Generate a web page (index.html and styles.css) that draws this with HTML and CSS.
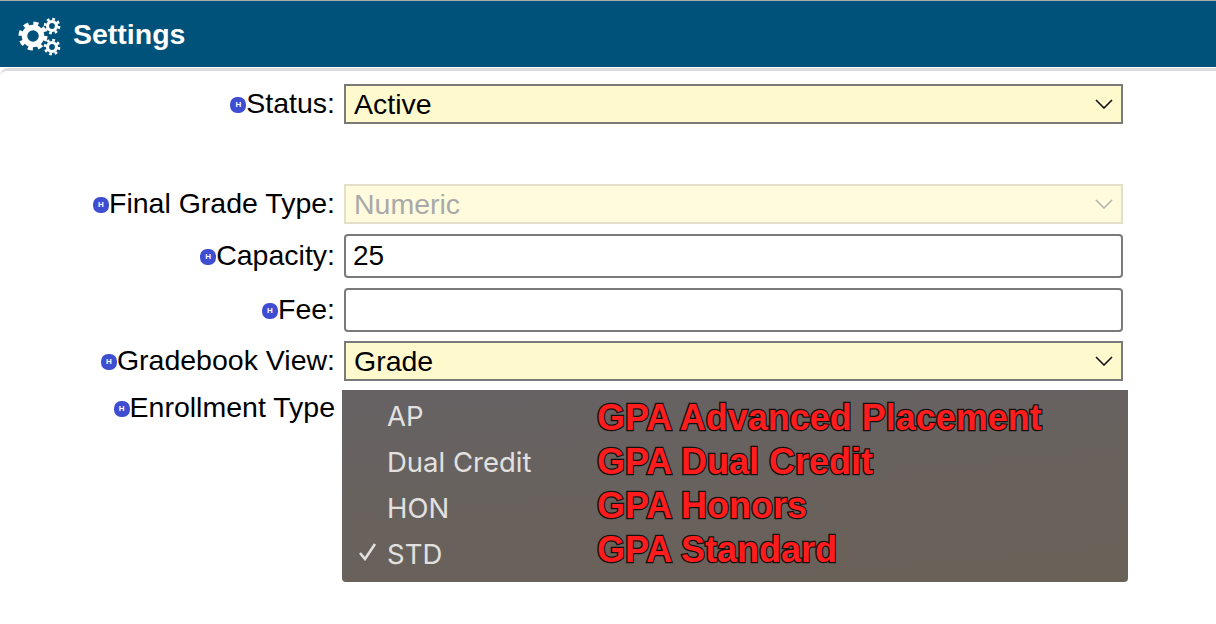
FILE: index.html
```html
<!DOCTYPE html>
<html>
<head>
<title>Settings</title>
<link rel="stylesheet" href="styles.css">
</head>
<body>

<header class="page-header">
  <svg class="gears-icon" width="44" height="44" viewBox="0 0 44 44">
    <g fill="none" stroke="#fff">
      <circle cx="15" cy="23" r="8.5" stroke-width="5.5"/>
      <circle cx="15" cy="23" r="12.5" stroke-width="4" stroke-dasharray="5 4.82"/>
      <circle cx="34" cy="13" r="4.5" stroke-width="3.2"/>
      <circle cx="34" cy="13" r="7" stroke-width="2.6" stroke-dasharray="2.75 2.75"/>
      <circle cx="34" cy="34" r="4.5" stroke-width="3.2"/>
      <circle cx="34" cy="34" r="7" stroke-width="2.6" stroke-dasharray="2.75 2.75"/>
    </g>
  </svg>
  <h1>Settings</h1>
</header>

<main class="settings-card">
  <div class="setting-row row-status">
    <label class="setting-label"><span class="help-dot">H</span>Status:</label>
    <div class="select-wrap">
      <select class="setting-select"><option>Active</option></select>
      <svg class="chevron" width="18" height="10" viewBox="0 0 18 10"><path d="M1 1l8 8 8-8" fill="none" stroke="#111" stroke-width="1.6"/></svg>
    </div>
  </div>

  <div class="setting-row">
    <label class="setting-label"><span class="help-dot">H</span>Final Grade Type:</label>
    <div class="select-wrap">
      <select class="setting-select" disabled><option>Numeric</option></select>
      <svg class="chevron" width="18" height="10" viewBox="0 0 18 10"><path d="M1 1l8 8 8-8" fill="none" stroke="#b5b5ad" stroke-width="1.6"/></svg>
    </div>
  </div>

  <div class="setting-row">
    <label class="setting-label"><span class="help-dot">H</span>Capacity:</label>
    <input class="setting-input" type="text" value="25">
  </div>

  <div class="setting-row row-fee">
    <label class="setting-label"><span class="help-dot">H</span>Fee:</label>
    <input class="setting-input" type="text">
  </div>

  <div class="setting-row">
    <label class="setting-label"><span class="help-dot">H</span>Gradebook View:</label>
    <div class="select-wrap">
      <select class="setting-select"><option>Grade</option></select>
      <svg class="chevron" width="18" height="10" viewBox="0 0 18 10"><path d="M1 1l8 8 8-8" fill="none" stroke="#111" stroke-width="1.6"/></svg>
    </div>
  </div>

  <div class="setting-row row-enrollment">
    <label class="setting-label"><span class="help-dot">H</span>Enrollment Type</label>
  </div>

  <!-- open dropdown with the red notes on top of it -->
  <div class="enroll-menu">
    <ul class="enroll-options">
      <li>AP</li>
      <li>Dual Credit</li>
      <li>HON</li>
      <li><svg class="check-mark" width="19" height="19" viewBox="0 0 19 19"><path d="M2 11l5 6L17 2" fill="none" stroke="#e3e1e0" stroke-width="2.6"/></svg>STD</li>
    </ul>
    <ul class="enroll-notes">
      <li>GPA Advanced Placement</li>
      <li>GPA Dual Credit</li>
      <li>GPA Honors</li>
      <li>GPA Standard</li>
    </ul>
  </div>
</main>

</body>
</html>
```

FILE: styles.css
```css
body {
  margin: 0;
  background-color: #fff;
  font-family: "Liberation Sans", Arial, sans-serif;
  color: #000;
}
.page-header {
  height: 66px;
  border-top: 1px solid #a9a9a9;
  background-color: #00527a;
  display: flex;
  align-items: center;
  gap: 11px;
  padding-left: 18px;
  color: #fff;
}
.page-header h1 {
  margin: 0;
  font-size: 28.5px;
  font-weight: bold;
}
.gears-icon {
  flex: none;
  margin-top: 2px;
}
.settings-card {
  position: relative;
  height: 540px;
  margin-top: 1px;
  padding-top: 13px;
  box-sizing: border-box;
  border-top: 3px solid #dcdcdc;
  border-radius: 8px 0 0 0;
}
.setting-row {
  display: grid;
  grid-template-columns: 336px 779px;
  column-gap: 8px;
  align-items: center;
  margin-bottom: 10px;
}
.row-status {
  margin-bottom: 60px;
}
.row-fee {
  margin-bottom: 9px;
}
.row-enrollment {
  margin-top: 5px;
}
.setting-label {
  display: flex;
  justify-content: flex-end;
  align-items: center;
  padding-right: 1px;
  padding-bottom: 2px;
  font-size: 28.5px;
}
.help-dot {
  width: 16px;
  height: 16px;
  border-radius: 45%;
  margin-top: 3px;
  background-color: #3f4ed1;
  color: #fff;
  font-size: 8px;
  font-weight: bold;
  line-height: 16px;
  text-align: center;
}
.select-wrap {
  position: relative;
  height: 40px;
}
.setting-select {
  appearance: none;
  width: 100%;
  height: 40px;
  margin: 0;
  padding: 0 8px;
  border: 2px solid #7a7a7a;
  border-radius: 0;
  background-color: #fffacd;
  font-family: "Liberation Sans", Arial, sans-serif;
  font-size: 28.5px;
  color: #000;
}
.setting-select:disabled {
  opacity: 1;
  border-color: #e2e0c8;
  background-color: #fffbdc;
  color: #a9a9a9;
}
.chevron {
  position: absolute;
  right: 10px;
  top: 15px;
}
.setting-input {
  width: 100%;
  height: 44px;
  margin: 0;
  padding: 0 7px;
  box-sizing: border-box;
  border: 2px solid #7a7a7a;
  border-radius: 4px;
  background-color: #fff;
  font-family: "Liberation Sans", Arial, sans-serif;
  font-size: 28px;
  color: #000;
}
.enroll-menu {
  position: absolute;
  left: 342px;
  top: 319px;
  width: 786px;
  height: 192px;
  display: flex;
  border-radius: 0 0 4px 4px;
  background: linear-gradient(175deg, #666264, #6a6157);
}
.enroll-options,
.enroll-notes {
  margin: 0;
  list-style: none;
}
.enroll-options {
  width: 255px;
  padding: 3px 0 0;
}
.enroll-options li {
  position: relative;
  height: 46px;
  line-height: 46px;
  padding-left: 45px;
  font-family: Inter, "Noto Sans", sans-serif;
  font-size: 27.5px;
  color: #e3e1e0;
}
.check-mark {
  position: absolute;
  left: 16px;
  top: 11px;
}
.enroll-notes {
  padding: 6px 0 0;
}
.enroll-notes li {
  height: 44px;
  line-height: 44px;
  font-size: 36px;
  font-weight: bold;
  color: #ff1c1c;
  -webkit-text-stroke: 2.5px #111;
  paint-order: stroke fill;
}
```
